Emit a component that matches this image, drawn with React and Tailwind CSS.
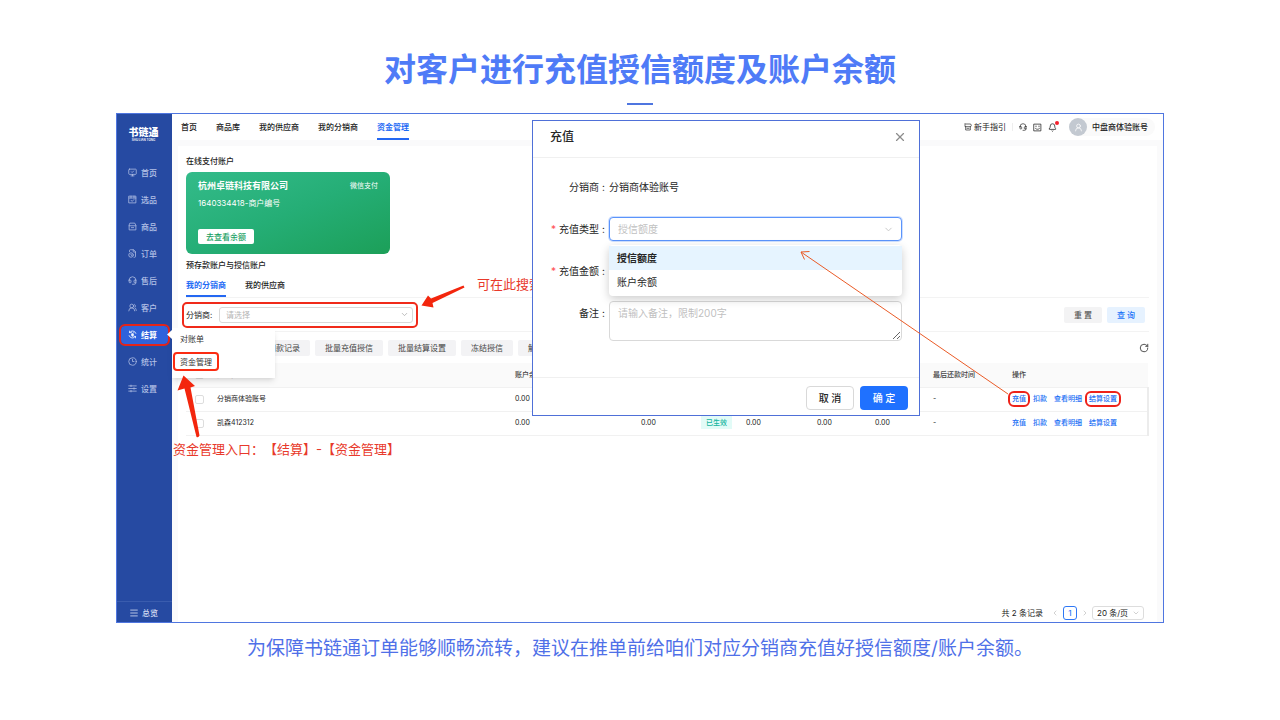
import React from "react";
import {
  MonitorCheck, FileClock, Headset, UsersRound,
  Clock3, Menu, Bell, RotateCw,
  ChevronDown, ChevronLeft, ChevronRight, X, UserRound,
} from "lucide-react";

function Glyph({ className, children }) {
  return (
    <svg className={className} viewBox="0 0 24 24" fill="none" stroke="currentColor" strokeWidth="2" strokeLinecap="round" strokeLinejoin="round" aria-hidden="true">
      {children}
    </svg>
  );
}

const PickIcon = (p) => (
  <Glyph className={p.className}><path d="M3 3h18v18H3zM3 8h18M8 3v5M16 3v5M8 14l3 3 5-5" /></Glyph>
);
const GoodsIcon = (p) => (
  <Glyph className={p.className}><path d="M6 3h12l3 6v12H3V9zM3 10h18M9 15h6" /></Glyph>
);
const SettleIcon = (p) => (
  <Glyph className={p.className}><path d="M21 9A9.500 9.500 0 0 0 4 7M4 3v4h4M3 15a9.500 9.500 0 0 0 17 2M20 21v-4h-4M9 7l3 4 3-4M12 11v6M9 12h6M9 15h6" /></Glyph>
);
const SettingsIcon = (p) => (
  <Glyph className={p.className}><path d="M2 5h20M2 12h20M2 19h20M8 3v4M16 10v4M8 17v4" /></Glyph>
);
const GuideIcon = (p) => (
  <Glyph className={p.className}><path d="M5 3h15l2 4-2 4H3V3zM5 11v10h14V11M9 16h6" /></Glyph>
);
const FaceIcon = (p) => (
  <Glyph className={p.className}><path d="M3 3h18v18H3zM8 8v2M16 8v2M7 15c3 2.500 7 2.500 10 0" /></Glyph>
);

const NAV = [
  { label: "首页", icon: MonitorCheck },
  { label: "选品", icon: PickIcon },
  { label: "商品", icon: GoodsIcon },
  { label: "订单", icon: FileClock },
  { label: "售后", icon: Headset },
  { label: "客户", icon: UsersRound },
  { label: "结算", icon: SettleIcon, active: true },
  { label: "统计", icon: Clock3 },
  { label: "设置", icon: SettingsIcon },
];

const TABS = ["首页", "商品库", "我的供应商", "我的分销商", "资金管理"];
const BATCH = ["扣款记录", "批量充值授信", "批量结算设置", "冻结授信", "解冻授信"];
const ROWS = [
  { name: "分销商体验账号", cells: ["0.00", "", "", "", "", ""], marked: true },
  { name: "凯森412312", cells: ["0.00", "0.00", "已生效", "0.00", "0.00", "0.00"] },
];

function Sidebar() {
  return (
    <aside className="flex w-[55px] shrink-0 flex-col bg-[#264aa2] text-[#b4c1e6]">
      <div className="flex h-[45px] flex-col items-center pt-3 pr-[2px] text-white">
        <span className="text-[10px] leading-3 font-black">书链通</span>
        <span className="text-[3px] leading-[4px] font-semibold">SHU LIAN TONG</span>
      </div>
      <nav>
        <ul>
          {NAV.map(({ label, icon: Icon, active }) => (
            <li key={label} className="relative flex h-[27px] items-center px-1">
              <a
                href="#"
                className={
                  active
                    ? "flex h-[18px] flex-1 items-center gap-1 rounded-sm bg-[#2f62dc] pl-[7px] font-bold text-white outline-2 outline-[#e3241b]"
                    : "flex h-[18px] flex-1 items-center gap-1 pl-[7px] font-medium"
                }
              >
                <Icon className="size-[9px]" />
                {label}
              </a>
              {active && <SettleMenu />}
            </li>
          ))}
        </ul>
      </nav>
      <a href="#" className="mt-auto flex h-[21px] items-center gap-[3px] border-t border-[#3a5cae] pt-px pl-3 font-medium text-[#d3dbf2]">
        <Menu className="size-[10px]" />
        总览
      </a>
    </aside>
  );
}

function SettleMenu() {
  return (
    <div className="absolute top-[7px] left-full z-20 flex h-[50px] w-[103px] flex-col items-start bg-white pt-px text-[#333] shadow-md">
      <svg className="absolute top-[2px] -left-[5px] h-[9px] w-[5px]" viewBox="0 0 5 9">
        <path d="M5 0 0 4.500 5 9z" fill="#fff" />
      </svg>
      <a href="#" className="flex h-5 items-center px-2">对账单</a>
      <a href="#" className="mx-[3px] mt-[5px] flex h-[15px] items-center rounded-[2px] px-[5px] outline-2 outline-[#fb2c12]">资金管理</a>
    </div>
  );
}

function TopBar() {
  return (
    <header className="flex h-[26px] items-center bg-white pr-2 pl-[9px] text-[#222]">
      <nav className="flex h-full gap-[19px] font-medium">
        {TABS.map((t) => (
          <a
            key={t}
            href="#"
            className={
              t === "资金管理"
                ? "flex items-center border-b-2 border-[#2468f2] pt-[2px] font-bold text-[#1f6bf5]"
                : "flex items-center border-b-2 border-transparent pt-[2px]"
            }
          >
            {t}
          </a>
        ))}
      </nav>
      <div className="ml-auto flex items-center">
        <GuideIcon className="mr-[2px] size-2" />
        <span>新手指引</span>
        <span className="mx-[6px] h-2 w-px bg-[#eee]" />
        <Headset className="size-2" />
        <FaceIcon className="ml-[6px] size-[9px]" />
        <span className="relative mr-3 ml-[6px]">
          <Bell className="size-[9px]" />
          <span className="absolute -top-[2px] -right-[2px] size-1 rounded-full bg-[#f5222d]" />
        </span>
        <div className="flex h-[18px] items-center gap-[5px] rounded-full bg-[#fafafa] pr-[7px]">
          <span className="flex size-[18px] items-center justify-center rounded-full bg-[#c3c9d1] text-white">
            <UserRound className="size-[9px]" />
          </span>
          <span className="font-medium">中盘商体验账号</span>
        </div>
      </div>
    </header>
  );
}

function PayCard() {
  return (
    <section className="mt-[5px] flex h-[82px] w-[204px] flex-col items-start rounded-md bg-linear-to-br from-[#33bb8a] via-[#25ae76] to-[#1c9f58] px-3 pt-2 text-white">
      <div className="flex w-full items-center justify-between">
        <h3 className="text-[9px] leading-3 font-bold">杭州卓链科技有限公司</h3>
        <span className="text-[7px] leading-3">微信支付</span>
      </div>
      <p className="mt-[5px] leading-3">1640334418-商户编号</p>
      <button className="mt-5 h-[15px] rounded-[2px] bg-white px-2 font-medium text-[#17a062]">去查看余额</button>
    </section>
  );
}

function Filters() {
  return (
    <form className="flex h-[34px] items-center border-b border-[#f3f3f3] pr-1">
      <div className="-ml-[2px] flex items-center rounded-[3px] py-[3px] pr-[3px] pl-[2px] outline-2 outline-[#f02a1a]">
        <label htmlFor="dealer" className="w-[33px] text-[#222]">分销商:</label>
        <span className="relative flex items-center">
          <select id="dealer" className="h-4 w-[194px] appearance-none rounded-[3px] border border-[#d9d9d9] bg-white px-[6px] leading-3 text-[#b5b5b5]">
            <option>请选择</option>
          </select>
          <ChevronDown className="pointer-events-none absolute right-1 size-[9px] text-[#aaa]" />
        </span>
      </div>
      <button type="button" className="ml-auto h-4 w-[38px] rounded-[2px] bg-[#f3f3f4] font-medium text-[#555]">重 置</button>
      <button type="button" className="ml-[5px] h-4 w-[38px] rounded-[2px] bg-[#e6f2ff] font-medium text-[#1a74f8]">查 询</button>
    </form>
  );
}

function Status({ value }) {
  if (value !== "已生效") return value;
  return <span className="-ml-1 bg-[#e2fbf7] px-[5px] py-[2px] font-medium text-[#13b5a0]">{value}</span>;
}

const MARK = "rounded-[2px] leading-2 outline-2 outline-offset-2 outline-[#ee2219]";

function AccountTable() {
  return (
    <table className="mt-[7px] w-full table-fixed text-left text-[7px] text-[#222]">
      <colgroup>
        <col className="w-[27px]" />
        <col />
        <col className="w-[126px]" />
        <col className="w-[64px]" />
        <col className="w-[41px]" />
        <col className="w-[71px]" />
        <col className="w-[58px]" />
        <col className="w-[58px]" />
        <col className="w-[79px]" />
        <col className="w-[140px]" />
      </colgroup>
      <thead className="bg-[#fafafa] text-[#444]">
        <tr className="h-6 border-b border-[#f1f1f1] [&>th]:pl-1 [&>th]:font-medium">
          <th><input type="checkbox" aria-label="全选" className="ml-[5px] block size-[9px] appearance-none rounded-[2px] border border-[#ddd] bg-white" /></th>
          <th>分销商</th>
          <th>账户余额</th>
          <th /><th /><th /><th /><th />
          <th>最后还款时间</th>
          <th>操作</th>
        </tr>
      </thead>
      <tbody className="border-r-2 border-[#ececec]">
        {ROWS.map((r) => (
          <tr key={r.name} className="h-6 border-b border-[#f1f1f1] [&>td]:pl-1">
            <td><input type="checkbox" aria-label={r.name} className="ml-[5px] block size-[9px] appearance-none rounded-[2px] border border-[#ddd] bg-white" /></td>
            <td>{r.name}</td>
            {r.cells.map((c, i) => (
              <td key={i}><Status value={c} /></td>
            ))}
            <td>-</td>
            <td>
              <div className="flex items-center gap-[7px] font-medium text-[#1a6ff5]">
                <button className={r.marked ? MARK : ""}>充值</button>
                <button>扣款</button>
                <button>查看明细</button>
                <button className={r.marked ? MARK : ""}>结算设置</button>
              </div>
            </td>
          </tr>
        ))}
      </tbody>
    </table>
  );
}

function Pagination() {
  return (
    <footer className="mt-auto flex items-center justify-end pr-[5px] pb-[2px] text-[#222]">
      <span>共 2 条记录</span>
      <button aria-label="上一页" className="ml-2 text-[#bbb]"><ChevronLeft className="size-[8px]" /></button>
      <button className="mx-[4px] size-[14px] rounded-[3px] border border-[#2f78f5] font-medium text-[#2f78f5]">1</button>
      <button aria-label="下一页" className="mr-[3px] text-[#bbb]"><ChevronRight className="size-[8px]" /></button>
      <span className="relative flex items-center">
        <select aria-label="每页条数" className="h-[14px] w-[52px] appearance-none rounded-[3px] border border-[#ddd] bg-white px-1 leading-3">
          <option>20 条/页</option>
        </select>
        <ChevronDown className="pointer-events-none absolute right-1 size-2 text-[#bbb]" />
      </span>
    </footer>
  );
}

function Label({ id, required, children }) {
  return (
    <label htmlFor={id} className="flex h-6 items-center justify-end gap-[3px]">
      {required && <span className="text-[#ff4d4f]">*</span>}
      <span>{children}</span>
      <span>:</span>
    </label>
  );
}

function RechargeDialog() {
  return (
    <div role="dialog" aria-labelledby="dlg" className="absolute top-[6px] left-[415px] z-10 w-[388px] border border-[#4f70d8] bg-white text-[10px] leading-4 text-[#262626]">
      <div className="flex h-[37px] items-center justify-between border-b border-[#f0f0f0] pr-3 pl-[17px] pb-1">
        <h2 id="dlg" className="text-[12px] font-medium">充值</h2>
        <button aria-label="关闭" className="text-[#8c8c8c]"><X className="size-[14px]" /></button>
      </div>
      <form className="grid grid-cols-[55px_1fr] gap-x-[4px] gap-y-[18px] pt-[17px] pr-[17px] pb-9 pl-[17px]">
        <span className="flex h-6 items-center justify-end gap-[3px]"><span>分销商</span><span>:</span></span>
        <span className="flex h-6 items-center">分销商体验账号</span>

        <Label id="type" required>充值类型</Label>
        <div className="relative flex items-center">
          <select id="type" className="h-6 w-full appearance-none rounded-[4px] border border-[#5b94fb] bg-white px-2 text-[#bfbfbf] ring-1 ring-[#cfe0ff]">
            <option>授信额度</option>
          </select>
          <ChevronDown className="pointer-events-none absolute right-2 size-[11px] text-[#c4c4c4]" />
          <ul role="listbox" className="absolute top-full right-0 left-0 z-10 mt-1 rounded-[4px] bg-white pt-px pb-[2px] shadow-[0_3px_10px_rgba(0,0,0,0.2)]">
            <li role="option" aria-selected="true" className="flex h-6 items-center bg-[#e6f4ff] px-2 font-bold">授信额度</li>
            <li role="option" aria-selected="false" className="flex h-6 items-center px-2">账户余额</li>
          </ul>
        </div>

        <Label id="amount" required>充值金额</Label>
        <input id="amount" className="h-6 w-full rounded-[4px] border border-[#d9d9d9] px-2" />

        <Label id="note">备注</Label>
        <textarea id="note" placeholder="请输入备注，限制200字" className="block h-10 w-full resize rounded-[4px] border border-[#d9d9d9] px-2 py-[3px] placeholder:text-[#bfbfbf]" />
      </form>
      <div className="flex justify-end gap-[6px] border-t border-[#f0f0f0] pt-2 pr-[11px] pb-[5px] font-medium">
        <button className="h-6 w-12 rounded-[4px] border border-[#d9d9d9]">取 消</button>
        <button className="h-6 w-12 rounded-[4px] bg-[#1f71ff] text-white">确 定</button>
      </div>
    </div>
  );
}

function Notes() {
  return (
    <>
      <p className="absolute top-[161px] left-[360px] text-[13px] leading-[18px] whitespace-nowrap text-[#e8392b]">可在此搜索</p>
      <p className="absolute top-[326px] left-[56px] text-[13px] leading-[18px] whitespace-nowrap text-[#e8392b] [text-spacing-trim:space-all]">资金管理入口：【结算】-【资金管理】</p>
      <svg className="pointer-events-none absolute top-0 left-0 z-20 h-[508px] w-[1046px]" viewBox="117 114 1046 508">
        <path fill="#f3260d" d="M421.500 305.500 428 295.500 431 298.500 463.500 285.500 464.500 287.500 432.500 303 433.500 307.500z" />
        <path fill="#f3260d" d="M183.500 375.500 195 386 190.500 387.500 199.500 435.500Q198.500 438 196.500 437L184.500 388.500 177.500 390.500z" />
        <path fill="none" stroke="#ea5b27" strokeWidth="1" d="M1008 394 801 252M809.500 251.500 801 252 804.500 259.500" />
      </svg>
    </>
  );
}

export default function App() {
  return (
    <div className="flex min-h-screen flex-col bg-white font-['Inter','Noto_Sans_CJK_SC',sans-serif]">
      <header className="flex h-[113px] flex-col items-center pt-[46px]">
        <h1 className="text-[32px] leading-[48px] font-bold text-[#4f7bf7]">对客户进行充值授信额度及账户余额</h1>
        <span className="mt-[9px] h-[2px] w-[26px] bg-[#4f76e0]" />
      </header>
      <div className="relative mx-[116px] flex flex-1 border border-[#4f76e0] text-[8px] leading-3">
        <Sidebar />
        <main className="flex min-w-0 flex-1 flex-col bg-[#fafafb]">
          <TopBar />
          <div className="mx-[6px] mt-[6px] flex flex-1 flex-col bg-white px-2 pt-[9px]">
            <h2 className="font-medium text-[#222]">在线支付账户</h2>
            <PayCard />
            <h2 className="mt-[5px] font-medium text-[#222]">预存款账户与授信账户</h2>
            <div className="flex h-[27px] gap-[19px] border-b border-[#f3f3f3] font-medium text-[#222]">
              <button className="border-b-2 border-[#2468f2] pt-1 font-bold text-[#1f6bf5]">我的分销商</button>
              <button className="border-b-2 border-transparent pt-1">我的供应商</button>
            </div>
            <Filters />
            <div className="flex items-center gap-[5px] pt-2 pl-[72px]">
              {BATCH.map((b) => (
                <button key={b} className="h-4 rounded-[2px] bg-[#f3f3f5] px-[10px] text-[#444]">{b}</button>
              ))}
              <button aria-label="刷新" className="ml-auto text-[#333]"><RotateCw className="size-[10px]" /></button>
            </div>
            <AccountTable />
            <Pagination />
          </div>
        </main>
        <Notes />
        <RechargeDialog />
      </div>
      <p className="flex h-[97px] items-start justify-center pt-3 text-[19px] leading-7 text-[#4f70e8]">
        为保障书链通订单能够顺畅流转，建议在推单前给咱们对应分销商充值好授信额度/账户余额。
      </p>
    </div>
  );
}
